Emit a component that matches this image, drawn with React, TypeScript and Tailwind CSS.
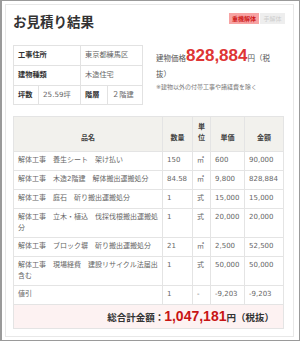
import React from 'react'

const rows = [
  { name: '解体工事　養生シート　架け払い', qty: '150', unit: '㎡', price: '600', amount: '90,000' },
  { name: '解体工事　木造2階建　解体搬出運搬処分', qty: '84.58', unit: '㎡', price: '9,800', amount: '828,884' },
  { name: '解体工事　庭石　斫り搬出運搬処分', qty: '1', unit: '式', price: '15,000', amount: '15,000' },
  { name: '解体工事　立木・植込　伐採伐根搬出運搬処分', qty: '1', unit: '式', price: '20,000', amount: '20,000' },
  { name: '解体工事　ブロック塀　斫り搬出運搬処分', qty: '21', unit: '㎡', price: '2,500', amount: '52,500' },
  { name: '解体工事　現場経費　建設リサイクル法届出含む', qty: '1', unit: '式', price: '50,000', amount: '50,000' },
  { name: '値引', qty: '1', unit: '-', price: '-9,203', amount: '-9,203' },
]

const font = "font-['DejaVu_Sans','Noto_Sans_CJK_JP',sans-serif]"

export default function App() {
  const td = 'border border-[#e4e4e4] px-[4px] py-[3px] align-top leading-[11px]'
  const th = 'border border-[#e4e4e4] px-[2px] pt-[5px] pb-[7px] align-bottom text-center font-bold leading-[11px] text-[#444]'
  const info = 'border border-[#e2e2e2] px-[4px] align-middle'

  return (
    <div className={`w-[300px] h-[341px] bg-white border border-l-2 border-[#9a9a9a] ${font} text-[7px] text-[#666]`}>
      <div className="ml-[3px] mt-[3px] w-[289px] h-[333px] border border-[#e8e8e8] px-[7px] pt-[6px]">
        <div className="flex items-start justify-between h-[20px]">
          <h1 className="text-[13.5px] font-bold leading-[20px] text-[#333] font-['Noto_Sans_CJK_JP',sans-serif]">お見積り結果</h1>
          <div className="flex gap-[1px] mt-[2px] mr-[1px]">
            <span className="h-[11px] w-[30px] bg-[#f7a3a3] text-[#cf1b1b] text-[6px] font-bold leading-[11px] text-center">重機解体</span>
            <span className="h-[11px] w-[25px] bg-[#eeeeee] text-[#cfcfcf] text-[6px] leading-[11px] text-center">手解体</span>
          </div>
        </div>

        <div className="flex mt-[14px]">
          <table className="w-[129px] table-fixed border-collapse text-[7.2px]">
            <colgroup>
              <col className="w-[25px]" />
              <col className="w-[42px]" />
              <col className="w-[27px]" />
              <col className="w-[35px]" />
            </colgroup>
            <tbody>
              <tr className="h-[20px]">
                <td colSpan={2} className={`${info} font-bold text-[#333]`}>工事住所</td>
                <td colSpan={2} className={info}>東京都練馬区</td>
              </tr>
              <tr className="h-[20px]">
                <td colSpan={2} className={`${info} font-bold text-[#333]`}>建物種類</td>
                <td colSpan={2} className={info}>木造住宅</td>
              </tr>
              <tr className="h-[19px]">
                <td className={`${info} font-bold text-[#333]`}>坪数</td>
                <td className={info}>25.59坪</td>
                <td className={`${info} font-bold text-[#333]`}>階層</td>
                <td className={info}>２階建</td>
              </tr>
            </tbody>
          </table>

          <div className="ml-[13px] w-[118px] pt-[3px]">
            <p className="leading-[16px] text-[7.5px] text-[#555]">
              建物価格<span className="font-['Liberation_Sans',sans-serif] text-[17px] leading-[16px] font-bold text-[#de3535]">828,884</span>円（税抜）
            </p>
            <p className="text-[6px] leading-[8px] text-[#777]">※建物以外の付帯工事や諸経費を除く</p>
          </div>
        </div>

        <table className="mt-[11px] w-[270px] table-fixed border-collapse">
          <colgroup>
            <col className="w-[149px]" />
            <col className="w-[30px]" />
            <col className="w-[18px]" />
            <col className="w-[34px]" />
            <col className="w-[39px]" />
          </colgroup>
          <thead>
            <tr className="bg-[#f2f1ed] h-[34px]">
              <th className={th}>品名</th>
              <th className={th}>数量</th>
              <th className={th}>単<br />位</th>
              <th className={th}>単価</th>
              <th className={th}>金額</th>
            </tr>
          </thead>
          <tbody>
            {rows.map((r) => (
              <tr key={r.name} className="h-[19px]">
                <td className={td}>{r.name}</td>
                <td className={td}>{r.qty}</td>
                <td className={td}>{r.unit}</td>
                <td className={td}>{r.price}</td>
                <td className={td}>{r.amount}</td>
              </tr>
            ))}
            <tr className="h-[24px] bg-[#fdf2f2]">
              <td colSpan={5} className="border border-[#e4e4e4] pr-[9px] text-right align-middle text-[9.5px] font-bold text-[#333] leading-[14px]">
                総合計金額：<span className="font-['Liberation_Sans',sans-serif] text-[14px] text-[#c81414]">1,047,181</span>円（税抜）
              </td>
            </tr>
          </tbody>
        </table>
      </div>
    </div>
  )
}
